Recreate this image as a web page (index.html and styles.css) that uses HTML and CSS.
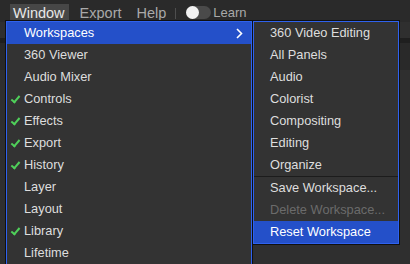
FILE: index.html
```html
<html>
<head>
    <link rel="stylesheet" href="styles.css">
</head>
<body>
    <div class="menubar">
        <div class="menubar_item active">Window</div>
        <div class="menubar_item">Export</div>
        <div class="menubar_item last">Help</div>
        <div class="menubar_sep"></div>
        <div class="toggle"><div class="knob"></div></div>
        <div class="toggle_label">Learn</div>
    </div>
    <div class="panel_strip"></div>

    <div class="menu main_menu">
        <div class="menu_row selected">Workspaces
            <svg class="chevron" width="7" height="11" viewBox="0 0 7 11"><path d="M1 1 L5.5 5.5 L1 10" fill="none" stroke="#ffffff" stroke-width="1.6"/></svg>
        </div>
        <div class="menu_row">360 Viewer</div>
        <div class="menu_row">Audio Mixer</div>
        <div class="menu_row checked">Controls</div>
        <div class="menu_row checked">Effects</div>
        <div class="menu_row checked">Export</div>
        <div class="menu_row checked">History</div>
        <div class="menu_row">Layer</div>
        <div class="menu_row">Layout</div>
        <div class="menu_row checked">Library</div>
        <div class="menu_row">Lifetime</div>
    </div>

    <div class="menu sub_menu">
        <div class="menu_row">360 Video Editing</div>
        <div class="menu_row">All Panels</div>
        <div class="menu_row">Audio</div>
        <div class="menu_row">Colorist</div>
        <div class="menu_row">Compositing</div>
        <div class="menu_row">Editing</div>
        <div class="menu_row">Organize</div>
        <div class="menu_sep"></div>
        <div class="menu_row">Save Workspace...</div>
        <div class="menu_row disabled">Delete Workspace...</div>
        <div class="menu_row selected">Reset Workspace</div>
    </div>
</body>
</html>
```

FILE: styles.css
```css
html {
    height: 100%;
}

body {
    margin: 0;
    height: 100%;
    overflow: hidden;
    background-color: #2f2f2f;
    font-family: 'Liberation Sans', Arial, sans-serif;
    position: relative;
}

.menubar {
    height: 22px;
    background-color: #2a2a2a;
    display: flex;
    align-items: center;
    padding-left: 10px;
    box-sizing: border-box;
}

.menubar_item {
    font-size: 14.5px;
    color: #a9a9a9;
    padding: 0 4px 0 3px;
    margin-right: 8px;
    height: 18px;
    line-height: 19px;
    margin-top: 4px;
}

    .menubar_item.active {
        background-color: #474747;
        color: #e8e8e8;
    }

    .menubar_item.last {
        margin-right: 0;
    }

.menubar_sep {
    width: 1px;
    height: 11px;
    background-color: #4e4e4e;
    margin: 4px 10px 0 5px;
}

.toggle {
    width: 25px;
    height: 13px;
    border-radius: 7px;
    background-color: #4a4a4a;
    margin-top: 2px;
}

    .toggle .knob {
        width: 13px;
        height: 13px;
        border-radius: 50%;
        background-color: #f2f2f2;
    }

.toggle_label {
    font-size: 13px;
    color: #a9a9a9;
    margin-left: 2px;
    margin-top: 2px;
}

.panel_strip {
    margin-top: 16px;
    height: 5px;
    background-color: #1f1f1f;
    border-bottom: 27px solid #292929;
}

.menu {
    position: absolute;
    background-color: #333333;
    border: 1px solid #2f62ee;
    box-shadow: 0 0 0 1px #101010;
}

.main_menu {
    left: 6px;
    top: 21px;
    width: 244px;
    height: 300px;
}

.sub_menu {
    left: 253px;
    top: 21px;
    width: 144px;
}

.menu_row {
    height: 22px;
    line-height: 22px;
    font-size: 12.8px;
    color: #dedede;
    position: relative;
    white-space: nowrap;
}

.main_menu .menu_row {
    padding-left: 17px;
}

.sub_menu .menu_row {
    padding-left: 16px;
}

.menu_row.selected {
    background-color: #2450c9;
    color: #ffffff;
}

.menu_row.disabled {
    color: #6b6b6b;
}

.menu_row.checked::before {
    content: "";
    position: absolute;
    left: 4px;
    top: 8px;
    width: 7px;
    height: 3px;
    border-left: 2px solid #4fd05a;
    border-bottom: 2px solid #4fd05a;
    transform: rotate(-50deg);
}

.chevron {
    position: absolute;
    right: 8px;
    top: 6px;
}

.menu_sep {
    height: 1px;
    background-color: #1c1c1c;
}
```
